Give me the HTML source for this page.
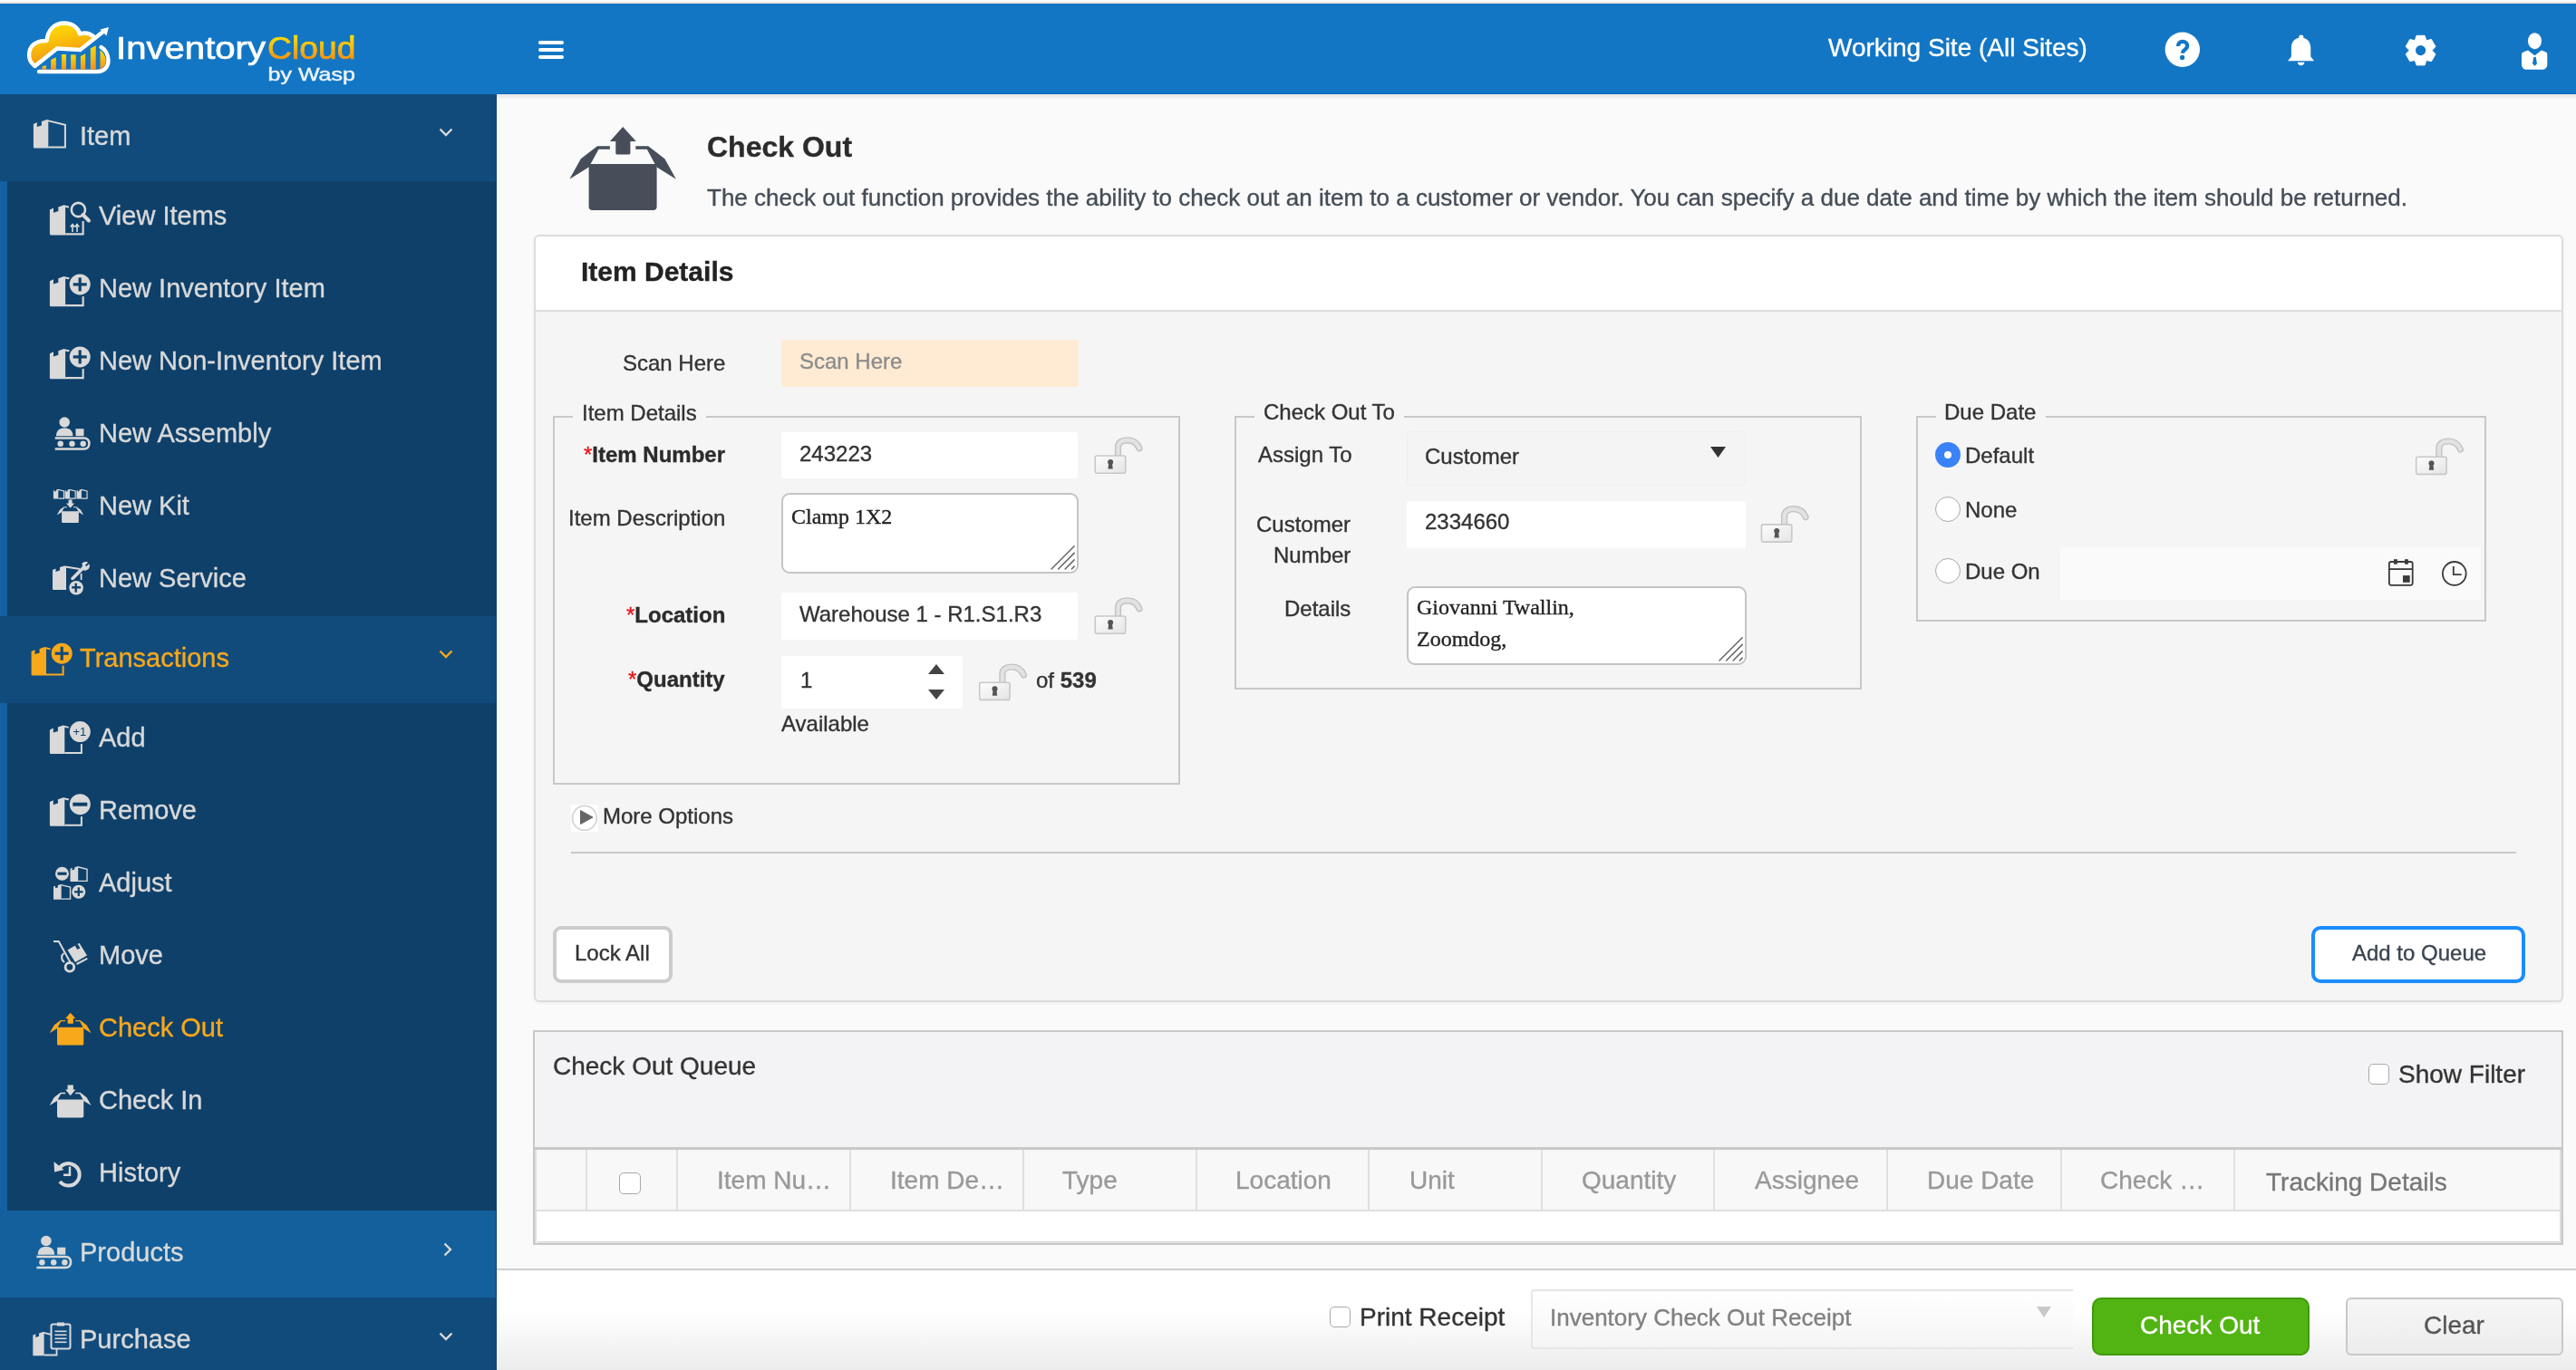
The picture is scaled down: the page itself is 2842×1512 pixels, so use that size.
<!DOCTYPE html>
<html><head><meta charset="utf-8"><style>
html,body{margin:0;padding:0;}
body{width:2842px;height:1512px;position:relative;overflow:hidden;background:#fafafa;font-family:"Liberation Sans",sans-serif;}
.t{position:absolute;white-space:nowrap;line-height:1;will-change:transform;-webkit-text-stroke-width:0.35px}
svg{overflow:visible}
</style></head><body>
<div style="position:absolute;left:0px;top:0px;width:2842px;height:2px;box-sizing:border-box;background:#fbfbfb"></div><div style="position:absolute;left:0px;top:2px;width:2842px;height:1px;box-sizing:border-box;background:#e2e1e1"></div><div style="position:absolute;left:0px;top:3px;width:2842px;height:1px;box-sizing:border-box;background:#eeeae6"></div><div style="position:absolute;left:0px;top:4px;width:2842px;height:1px;box-sizing:border-box;background:#036ac1"></div><div style="position:absolute;left:0px;top:5px;width:2842px;height:99px;box-sizing:border-box;background:#1376c4"></div><div style="position:absolute;left:548px;top:103px;width:2294px;height:1px;box-sizing:border-box;background:#036ac1"></div><div style="position:absolute;left:548px;top:104px;width:2294px;height:1408px;box-sizing:border-box;background:#fafafa"></div><div style="position:absolute;left:548px;top:104px;width:2294px;height:1px;box-sizing:border-box;background:#efebe6"></div><div style="position:absolute;left:548px;top:105px;width:2294px;height:5px;box-sizing:border-box;background:linear-gradient(#e4e4e4,rgba(250,250,250,0))"></div><div style="position:absolute;left:0px;top:104px;width:548px;height:96px;box-sizing:border-box;background:#114b7c"></div><div style="position:absolute;left:0px;top:200px;width:548px;height:480px;box-sizing:border-box;background:#0e406a"></div><div style="position:absolute;left:0px;top:200px;width:8px;height:480px;box-sizing:border-box;background:#1560a0"></div><div style="position:absolute;left:0px;top:680px;width:548px;height:96px;box-sizing:border-box;background:#114b7c"></div><div style="position:absolute;left:0px;top:776px;width:548px;height:560px;box-sizing:border-box;background:#0e406a"></div><div style="position:absolute;left:0px;top:776px;width:8px;height:560px;box-sizing:border-box;background:#1560a0"></div><div style="position:absolute;left:0px;top:1336px;width:548px;height:96px;box-sizing:border-box;background:#13609c"></div><div style="position:absolute;left:0px;top:1432px;width:548px;height:80px;box-sizing:border-box;background:#114b7c"></div><div style="position:absolute;left:547px;top:104px;width:1px;height:1408px;box-sizing:border-box;background:#0b4173"></div><div class="t" style="left:88px;top:136.45px;font-size:29px;color:#d9d9d9;font-weight:400;font-family:'Liberation Sans', sans-serif;">Item</div><div class="t" style="left:88px;top:712.45px;font-size:29px;color:#f7a81b;font-weight:400;font-family:'Liberation Sans', sans-serif;">Transactions</div><div class="t" style="left:88px;top:1368.45px;font-size:29px;color:#d9d9d9;font-weight:400;font-family:'Liberation Sans', sans-serif;">Products</div><div class="t" style="left:88px;top:1464.45px;font-size:29px;color:#d9d9d9;font-weight:400;font-family:'Liberation Sans', sans-serif;">Purchase</div><div class="t" style="left:108.5px;top:224.45px;font-size:29px;color:#d9d9d9;font-weight:400;font-family:'Liberation Sans', sans-serif;">View Items</div><div class="t" style="left:108.5px;top:304.45px;font-size:29px;color:#d9d9d9;font-weight:400;font-family:'Liberation Sans', sans-serif;">New Inventory Item</div><div class="t" style="left:108.5px;top:384.45px;font-size:29px;color:#d9d9d9;font-weight:400;font-family:'Liberation Sans', sans-serif;">New Non-Inventory Item</div><div class="t" style="left:108.5px;top:464.45px;font-size:29px;color:#d9d9d9;font-weight:400;font-family:'Liberation Sans', sans-serif;">New Assembly</div><div class="t" style="left:108.5px;top:544.45px;font-size:29px;color:#d9d9d9;font-weight:400;font-family:'Liberation Sans', sans-serif;">New Kit</div><div class="t" style="left:108.5px;top:624.45px;font-size:29px;color:#d9d9d9;font-weight:400;font-family:'Liberation Sans', sans-serif;">New Service</div><div class="t" style="left:108.5px;top:800.45px;font-size:29px;color:#d9d9d9;font-weight:400;font-family:'Liberation Sans', sans-serif;">Add</div><div class="t" style="left:108.5px;top:880.45px;font-size:29px;color:#d9d9d9;font-weight:400;font-family:'Liberation Sans', sans-serif;">Remove</div><div class="t" style="left:108.5px;top:960.45px;font-size:29px;color:#d9d9d9;font-weight:400;font-family:'Liberation Sans', sans-serif;">Adjust</div><div class="t" style="left:108.5px;top:1040.45px;font-size:29px;color:#d9d9d9;font-weight:400;font-family:'Liberation Sans', sans-serif;">Move</div><div class="t" style="left:108.5px;top:1120.45px;font-size:29px;color:#f7a81b;font-weight:400;font-family:'Liberation Sans', sans-serif;">Check Out</div><div class="t" style="left:108.5px;top:1200.45px;font-size:29px;color:#d9d9d9;font-weight:400;font-family:'Liberation Sans', sans-serif;">Check In</div><div class="t" style="left:108.5px;top:1280.45px;font-size:29px;color:#d9d9d9;font-weight:400;font-family:'Liberation Sans', sans-serif;">History</div><svg style="position:absolute;left:484px;top:141px;" width="16" height="10" viewBox="0 0 16 10"><path d="M1.5 1.5 L8 8 L14.5 1.5" fill="none" stroke="#d9d9d9" stroke-width="2.4"/></svg><svg style="position:absolute;left:484px;top:717px;" width="16" height="10" viewBox="0 0 16 10"><path d="M1.5 1.5 L8 8 L14.5 1.5" fill="none" stroke="#f7a81b" stroke-width="2.4"/></svg><svg style="position:absolute;left:489px;top:1371px;" width="10" height="16" viewBox="0 0 10 16"><path d="M1.5 1.5 L8 8 L1.5 14.5" fill="none" stroke="#d9d9d9" stroke-width="2.4"/></svg><svg style="position:absolute;left:484px;top:1470px;" width="16" height="10" viewBox="0 0 16 10"><path d="M1.5 1.5 L8 8 L14.5 1.5" fill="none" stroke="#d9d9d9" stroke-width="2.4"/></svg><div style="position:absolute;left:594px;top:45px;width:28px;height:4px;box-sizing:border-box;background:#fff;border-radius:2px"></div><div style="position:absolute;left:594px;top:53px;width:28px;height:4px;box-sizing:border-box;background:#fff;border-radius:2px"></div><div style="position:absolute;left:594px;top:61px;width:28px;height:4px;box-sizing:border-box;background:#fff;border-radius:2px"></div><div class="t" style="left:2017px;top:38.80px;font-size:28px;color:#fff;font-weight:400;font-family:'Liberation Sans', sans-serif;">Working Site (All Sites)</div><div class="t" style="left:780px;top:145.91px;font-size:32px;color:#2b2b2b;font-weight:700;font-family:'Liberation Sans', sans-serif;">Check Out</div><div class="t" style="left:780px;top:205.49px;font-size:26px;color:#454d57;font-weight:400;font-family:'Liberation Sans', sans-serif;">The check out function provides the ability to check out an item to a customer or vendor. You can specify a due date and time by which the item should be returned.</div><div style="position:absolute;left:589px;top:259px;width:2239px;height:847px;box-sizing:border-box;background:#f5f5f5;border:2px solid #dcdcdc;border-radius:6px;box-shadow:0 1px 3px rgba(0,0,0,0.06)"></div><div style="position:absolute;left:591px;top:261px;width:2235px;height:83px;box-sizing:border-box;background:#fff;border-bottom:2px solid #dcdcdc;border-radius:4px 4px 0 0"></div><div class="t" style="left:640.5px;top:284.61px;font-size:30px;color:#222;font-weight:700;font-family:'Liberation Sans', sans-serif;">Item Details</div><div class="t" style="right:2042px;top:388.68px;font-size:24px;color:#333;font-weight:400;font-family:'Liberation Sans', sans-serif;">Scan Here</div><div style="position:absolute;left:862px;top:375px;width:328px;height:52px;box-sizing:border-box;background:#ffebd3;border-radius:3px"></div><div class="t" style="left:882px;top:387.18px;font-size:24px;color:#8c8c8c;font-weight:400;font-family:'Liberation Sans', sans-serif;">Scan Here</div><div style="position:absolute;left:610px;top:459px;width:692px;height:407px;box-sizing:border-box;border:2px solid #c8c8c8"></div><div style="position:absolute;left:632px;top:458px;width:147px;height:4px;box-sizing:border-box;background:#f5f5f5"></div><div class="t" style="left:642px;top:443.68px;font-size:24px;color:#333;font-weight:400;font-family:'Liberation Sans', sans-serif;">Item Details</div><div style="position:absolute;left:1362px;top:459px;width:692px;height:302px;box-sizing:border-box;border:2px solid #c8c8c8"></div><div style="position:absolute;left:1384px;top:458px;width:165px;height:4px;box-sizing:border-box;background:#f5f5f5"></div><div class="t" style="left:1394px;top:443.18px;font-size:24px;color:#333;font-weight:400;font-family:'Liberation Sans', sans-serif;">Check Out To</div><div style="position:absolute;left:2114px;top:459px;width:629px;height:227px;box-sizing:border-box;border:2px solid #c8c8c8"></div><div style="position:absolute;left:2136px;top:458px;width:121px;height:4px;box-sizing:border-box;background:#f5f5f5"></div><div class="t" style="left:2145px;top:443.18px;font-size:24px;color:#333;font-weight:400;font-family:'Liberation Sans', sans-serif;">Due Date</div><div class="t" style="right:2042px;top:489.68px;font-size:24px;font-weight:700;color:#2b2b2b"><span style="color:#e8141b;font-weight:400">*</span>Item Number</div><div style="position:absolute;left:862px;top:477px;width:327px;height:51px;box-sizing:border-box;background:#fff;border-radius:2px"></div><div class="t" style="left:882px;top:488.68px;font-size:24px;color:#333;font-weight:400;font-family:'Liberation Sans', sans-serif;">243223</div><div class="t" style="right:2042px;top:559.68px;font-size:24px;color:#333;font-weight:400;font-family:'Liberation Sans', sans-serif;">Item Description</div><div style="position:absolute;left:862px;top:544px;width:328px;height:89px;box-sizing:border-box;background:#fff;border:2px solid #c4c4c4;border-radius:9px"></div><svg style="position:absolute;left:0px;top:0px;" width="2842" height="1512" viewBox="0 0 2842 1512"><path d="M1160.0,628 L1185.2,602.8 M1167.6,628 L1185.2,610.4 M1175.1,628 L1185.2,617.9 M1182.3,628 L1185.2,625.1 " stroke="#666" stroke-width="1.5" stroke-linecap="round" fill="none"/></svg><div class="t" style="left:873px;top:558.40px;font-size:24px;color:#222;font-weight:400;font-family:'Liberation Serif', serif;">Clamp 1X2</div><div class="t" style="right:2042px;top:666.68px;font-size:24px;font-weight:700;color:#2b2b2b"><span style="color:#e8141b;font-weight:400">*</span>Location</div><div style="position:absolute;left:862px;top:654px;width:327px;height:52px;box-sizing:border-box;background:#fff;border-radius:2px"></div><div class="t" style="left:882px;top:666.18px;font-size:24px;color:#333;font-weight:400;font-family:'Liberation Sans', sans-serif;">Warehouse 1 - R1.S1.R3</div><div class="t" style="right:2042px;top:737.68px;font-size:24px;font-weight:700;color:#2b2b2b"><span style="color:#e8141b;font-weight:400">*</span>Quantity</div><div style="position:absolute;left:862px;top:724px;width:200px;height:58px;box-sizing:border-box;background:#fff;border-radius:2px"></div><div class="t" style="left:883px;top:738.68px;font-size:24px;color:#333;font-weight:400;font-family:'Liberation Sans', sans-serif;">1</div><svg style="position:absolute;left:1024px;top:733px;" width="18" height="11" viewBox="0 0 18 11"><path d="M0 11 L9 0 L18 11 Z" fill="#444"/></svg><svg style="position:absolute;left:1024px;top:761px;" width="18" height="11" viewBox="0 0 18 11"><path d="M0 0 L18 0 L9 11 Z" fill="#444"/></svg><div class="t" style="left:1142.5px;top:738.68px;font-size:24px;color:#333">of <b>539</b></div><div class="t" style="left:862px;top:787.18px;font-size:24px;color:#333;font-weight:400;font-family:'Liberation Sans', sans-serif;">Available</div><div class="t" style="left:665px;top:889.18px;font-size:24px;color:#333;font-weight:400;font-family:'Liberation Sans', sans-serif;">More Options</div><div style="position:absolute;left:630px;top:940px;width:2146px;height:2px;box-sizing:border-box;background:#c8c8c8"></div><div style="position:absolute;left:610px;top:1022px;width:132px;height:63px;box-sizing:border-box;background:#fff;border:4px solid #cccccc;border-radius:9px"></div><div class="t" style="left:634px;top:1039.68px;font-size:24px;color:#333;font-weight:400;font-family:'Liberation Sans', sans-serif;">Lock All</div><div style="position:absolute;left:2550px;top:1022px;width:236px;height:63px;box-sizing:border-box;background:#fff;border:4px solid #1a8cff;border-radius:10px"></div><div class="t" style="left:2594.5px;top:1039.68px;font-size:24px;color:#3a4450;font-weight:400;font-family:'Liberation Sans', sans-serif;">Add to Queue</div><div class="t" style="left:1387.5px;top:490.18px;font-size:24px;color:#333;font-weight:400;font-family:'Liberation Sans', sans-serif;">Assign To</div><div style="position:absolute;left:1552px;top:476px;width:374px;height:60px;box-sizing:border-box;background:#f4f4f4;border:1px solid #efefef;border-radius:4px"></div><div class="t" style="left:1572px;top:492.18px;font-size:24px;color:#333;font-weight:400;font-family:'Liberation Sans', sans-serif;">Customer</div><svg style="position:absolute;left:1887px;top:493px;" width="17" height="12" viewBox="0 0 17 12"><path d="M0 0 L17 0 L8.5 12 Z" fill="#333"/></svg><div class="t" style="right:1352px;top:566.68px;font-size:24px;color:#333;font-weight:400;font-family:'Liberation Sans', sans-serif;">Customer</div><div class="t" style="right:1352px;top:600.68px;font-size:24px;color:#333;font-weight:400;font-family:'Liberation Sans', sans-serif;">Number</div><div style="position:absolute;left:1552px;top:553px;width:374px;height:52px;box-sizing:border-box;background:#fff;border-radius:2px"></div><div class="t" style="left:1572px;top:564.18px;font-size:24px;color:#333;font-weight:400;font-family:'Liberation Sans', sans-serif;">2334660</div><div class="t" style="right:1352px;top:660.18px;font-size:24px;color:#333;font-weight:400;font-family:'Liberation Sans', sans-serif;">Details</div><div style="position:absolute;left:1552px;top:647px;width:375px;height:87px;box-sizing:border-box;background:#fff;border:2px solid #c4c4c4;border-radius:9px"></div><svg style="position:absolute;left:0px;top:0px;" width="2842" height="1512" viewBox="0 0 2842 1512"><path d="M1897.0,729 L1922.2,703.8 M1904.6,729 L1922.2,711.4 M1912.1,729 L1922.2,718.9 M1919.3,729 L1922.2,726.1 " stroke="#666" stroke-width="1.5" stroke-linecap="round" fill="none"/></svg><div class="t" style="left:1563px;top:658.40px;font-size:24px;color:#222;font-weight:400;font-family:'Liberation Serif', serif;">Giovanni Twallin,</div><div class="t" style="left:1563px;top:692.90px;font-size:24px;color:#222;font-weight:400;font-family:'Liberation Serif', serif;">Zoomdog,</div><div class="t" style="left:2168px;top:490.68px;font-size:24px;color:#333;font-weight:400;font-family:'Liberation Sans', sans-serif;">Default</div><div class="t" style="left:2168px;top:550.68px;font-size:24px;color:#333;font-weight:400;font-family:'Liberation Sans', sans-serif;">None</div><div class="t" style="left:2168px;top:618.68px;font-size:24px;color:#333;font-weight:400;font-family:'Liberation Sans', sans-serif;">Due On</div><div style="position:absolute;left:2273px;top:604px;width:464px;height:58px;box-sizing:border-box;background:#fafafa;border-radius:3px"></div><div style="position:absolute;left:588px;top:1137px;width:2240px;height:237px;box-sizing:border-box;background:#f3f3f5;border:2px solid #c8c8c8;border-bottom:none"></div><div class="t" style="left:609.5px;top:1162.80px;font-size:28px;color:#333;font-weight:400;font-family:'Liberation Sans', sans-serif;">Check Out Queue</div><div class="t" style="left:2646px;top:1172.30px;font-size:28px;color:#333;font-weight:400;font-family:'Liberation Sans', sans-serif;">Show Filter</div><div style="position:absolute;left:588px;top:1266px;width:2240px;height:108px;box-sizing:border-box;border:2px solid #c8c8c8;border-top:3px solid #c8c8c8;background:#fff"></div><div style="position:absolute;left:591px;top:1269px;width:2235px;height:68px;box-sizing:border-box;background:#f8f8f8;border-bottom:2px solid #e0e0e0"></div><div style="position:absolute;left:646px;top:1269px;width:2px;height:68px;box-sizing:border-box;background:#e0e0e0"></div><div style="position:absolute;left:746px;top:1269px;width:2px;height:68px;box-sizing:border-box;background:#e0e0e0"></div><div style="position:absolute;left:937px;top:1269px;width:2px;height:68px;box-sizing:border-box;background:#e0e0e0"></div><div style="position:absolute;left:1128px;top:1269px;width:2px;height:68px;box-sizing:border-box;background:#e0e0e0"></div><div style="position:absolute;left:1319px;top:1269px;width:2px;height:68px;box-sizing:border-box;background:#e0e0e0"></div><div style="position:absolute;left:1509px;top:1269px;width:2px;height:68px;box-sizing:border-box;background:#e0e0e0"></div><div style="position:absolute;left:1700px;top:1269px;width:2px;height:68px;box-sizing:border-box;background:#e0e0e0"></div><div style="position:absolute;left:1890px;top:1269px;width:2px;height:68px;box-sizing:border-box;background:#e0e0e0"></div><div style="position:absolute;left:2081px;top:1269px;width:2px;height:68px;box-sizing:border-box;background:#e0e0e0"></div><div style="position:absolute;left:2273px;top:1269px;width:2px;height:68px;box-sizing:border-box;background:#e0e0e0"></div><div style="position:absolute;left:2464px;top:1269px;width:2px;height:68px;box-sizing:border-box;background:#e0e0e0"></div><div class="t" style="left:791px;top:1289.30px;font-size:28px;color:#999;font-weight:400;font-family:'Liberation Sans', sans-serif;">Item Nu…</div><div class="t" style="left:981.5px;top:1289.30px;font-size:28px;color:#999;font-weight:400;font-family:'Liberation Sans', sans-serif;">Item De…</div><div class="t" style="left:1171.5px;top:1289.30px;font-size:28px;color:#999;font-weight:400;font-family:'Liberation Sans', sans-serif;">Type</div><div class="t" style="left:1362.5px;top:1289.30px;font-size:28px;color:#999;font-weight:400;font-family:'Liberation Sans', sans-serif;">Location</div><div class="t" style="left:1554.5px;top:1289.30px;font-size:28px;color:#999;font-weight:400;font-family:'Liberation Sans', sans-serif;">Unit</div><div class="t" style="left:1744.5px;top:1289.30px;font-size:28px;color:#999;font-weight:400;font-family:'Liberation Sans', sans-serif;">Quantity</div><div class="t" style="left:1935.5px;top:1289.30px;font-size:28px;color:#999;font-weight:400;font-family:'Liberation Sans', sans-serif;">Assignee</div><div class="t" style="left:2125.5px;top:1289.30px;font-size:28px;color:#999;font-weight:400;font-family:'Liberation Sans', sans-serif;">Due Date</div><div class="t" style="left:2316.5px;top:1289.30px;font-size:28px;color:#999;font-weight:400;font-family:'Liberation Sans', sans-serif;">Check …</div><div class="t" style="left:2500px;top:1291.30px;font-size:28px;color:#777;font-weight:400;font-family:'Liberation Sans', sans-serif;">Tracking Details</div><div style="position:absolute;left:593px;top:1370px;width:2233px;height:2px;box-sizing:border-box;background:#dedede"></div><div style="position:absolute;left:2824px;top:1269px;width:2px;height:103px;box-sizing:border-box;background:#dedede"></div><div style="position:absolute;left:590px;top:1269px;width:2px;height:103px;box-sizing:border-box;background:#dedede"></div><div style="position:absolute;left:548px;top:1400px;width:2294px;height:112px;box-sizing:border-box;background:linear-gradient(#fff 0%,#fff 40%,#ececec 100%);border-top:2px solid #cfcfcf"></div><div class="t" style="left:1500px;top:1439.80px;font-size:28px;color:#333;font-weight:400;font-family:'Liberation Sans', sans-serif;">Print Receipt</div><div style="position:absolute;left:1689px;top:1423px;width:598px;height:66px;box-sizing:border-box;background:linear-gradient(#fff,#f5f5f5);border:2px solid #e6e6e6;border-right:none;border-radius:4px 0 0 4px"></div><div class="t" style="left:1710px;top:1440.99px;font-size:26px;color:#808080;font-weight:400;font-family:'Liberation Sans', sans-serif;">Inventory Check Out Receipt</div><svg style="position:absolute;left:2247px;top:1442px;" width="16" height="12" viewBox="0 0 16 12"><path d="M0 0 L16 0 L8 12 Z" fill="#c8c8c8"/></svg><div style="position:absolute;left:2308px;top:1432px;width:240px;height:64px;box-sizing:border-box;background:#52b412;border:2px solid #3f9a0d;border-radius:10px"></div><div class="t" style="left:2361px;top:1448.80px;font-size:28px;color:#fff;font-weight:400;font-family:'Liberation Sans', sans-serif;">Check Out</div><div style="position:absolute;left:2588px;top:1432px;width:240px;height:64px;box-sizing:border-box;background:linear-gradient(#f6f6f6,#ececec);border:2px solid #c8c8c8;border-radius:6px"></div><div class="t" style="left:2674px;top:1448.80px;font-size:28px;color:#555;font-weight:400;font-family:'Liberation Sans', sans-serif;">Clear</div><div style="position:absolute;left:2613px;top:1174px;width:23px;height:23px;box-sizing:border-box;background:#fff;border:1.5px solid #a9a9a9;border-radius:5px"></div><div style="position:absolute;left:683px;top:1294px;width:24px;height:24px;box-sizing:border-box;background:#fff;border:1.5px solid #a9a9a9;border-radius:5px"></div><div style="position:absolute;left:1467px;top:1442px;width:23px;height:23px;box-sizing:border-box;background:#fff;border:1.5px solid #a9a9a9;border-radius:5px"></div><div style="position:absolute;left:2135px;top:488px;width:28px;height:28px;box-sizing:border-box;background:#3a82f7;border-radius:50%"></div><div style="position:absolute;left:2145px;top:498px;width:8px;height:8px;box-sizing:border-box;background:#fff;border-radius:50%"></div><div style="position:absolute;left:2135px;top:548px;width:28px;height:28px;box-sizing:border-box;background:#fff;border:1.5px solid #a9a9a9;border-radius:50%"></div><div style="position:absolute;left:2135px;top:616px;width:28px;height:28px;box-sizing:border-box;background:#fff;border:1.5px solid #a9a9a9;border-radius:50%"></div><svg style="position:absolute;left:0;top:0;pointer-events:none" width="2842" height="1512" viewBox="0 0 2842 1512">
<defs>
<linearGradient id="lgY" x1="0" y1="0" x2="0.35" y2="1"><stop offset="0" stop-color="#ffe800"/><stop offset="1" stop-color="#f39313"/></linearGradient>
<linearGradient id="lgB" x1="0" y1="1" x2="0" y2="0"><stop offset="0" stop-color="#f7901a"/><stop offset="1" stop-color="#f9dc0a"/></linearGradient>
<linearGradient id="lgT" x1="0" y1="0" x2="0" y2="1"><stop offset="0" stop-color="#fbe30c"/><stop offset="1" stop-color="#f39417"/></linearGradient>
</defs>
<g transform="translate(26,18)">
<path d="M12,54 C4,47 5,33 15.5,29.5 C19,28 22.5,27.8 25.5,28.5 C26.5,16 34,9 45,9 C54,9 60.5,15 61.5,21.5 C67,19.5 72.5,20.5 77,24 L62,36 L37,34 Z" fill="url(#lgY)"/>
<path d="M12.5,55 C3,48 4,33 15.5,28.5 C19,27 22.5,26.8 25.5,27 C26.5,15 34,7.5 45,7.5 C54,7.5 60.5,13 62,19.5 C67.5,17.5 73,18.5 78,23" fill="none" stroke="#fff" stroke-width="4.4" stroke-linejoin="round" stroke-linecap="round"/>
<path d="M12.5,55 L37,35.5 L62.5,37 L89,16" fill="none" stroke="#fff" stroke-width="4.4" stroke-linejoin="miter"/>
<path d="M94,12 L84.5,14.5 L91.5,21.5 Z" fill="#fff"/>
<path d="M17,61 L82,61 C89,61 93.5,56 93.5,48.5 C93.5,42 90,36.5 85.5,34" fill="none" stroke="#fff" stroke-width="4.4" stroke-linecap="round"/>
<path d="M84.5,37.5 C88.5,40 90.8,45 90.8,49 C90.8,53 89,56.5 84.5,58.6 Z" fill="url(#lgB)"/>
<path d="M20.4,55.5 L25,53.9 L25,58.8 L20.4,58.8 Z" fill="url(#lgB)"/>
<path d="M30.1,48 L35.8,45.3 L35.8,58.8 L30.1,58.8 Z" fill="url(#lgB)"/>
<path d="M41.9,42 L47,42 L47,58.8 L41.9,58.8 Z" fill="url(#lgB)"/>
<path d="M52.1,42.4 L57.7,42.4 L57.7,58.8 L52.1,58.8 Z" fill="url(#lgB)"/>
<path d="M62.9,44 L68.2,41.3 L68.2,58.8 L62.9,58.8 Z" fill="url(#lgB)"/>
<path d="M73.8,35.5 L79.7,32.2 L79.7,58.8 L73.8,58.8 Z" fill="url(#lgB)"/>
</g>
</svg><svg style="position:absolute;left:0;top:0;pointer-events:none" width="2842" height="1512" viewBox="0 0 2842 1512"><text x="128" y="65.3" font-family="Liberation Sans" font-size="35" fill="#fff" stroke="#fff" stroke-width="0.7" textLength="165" lengthAdjust="spacingAndGlyphs">Inventory</text><defs><linearGradient id="lgC" x1="0" y1="0" x2="0" y2="1"><stop offset="0.1" stop-color="#fae60a"/><stop offset="0.85" stop-color="#f39012"/></linearGradient></defs><text x="295" y="65.3" font-family="Liberation Sans" font-size="35" fill="url(#lgC)" stroke="url(#lgC)" stroke-width="0.7" textLength="97.5" lengthAdjust="spacingAndGlyphs">Cloud</text><text x="295.5" y="89.3" font-family="Liberation Sans" font-size="21" fill="#eef4fb" stroke="#eef4fb" stroke-width="0.45" textLength="96.5" lengthAdjust="spacingAndGlyphs">by Wasp</text></svg><svg style="position:absolute;left:0;top:0;pointer-events:none" width="2842" height="1512" viewBox="0 0 2842 1512">
<circle cx="2407.8" cy="54.7" r="19.2" fill="#fff"/>
<path d="M2403,51 C2403,47.8 2405,45.9 2408,45.9 C2411.2,45.9 2413.2,47.9 2413.2,50.5 C2413.2,53.3 2410.8,54.5 2409.3,55.8 C2408.3,56.7 2408,57.5 2408,58.8" fill="none" stroke="#1376c4" stroke-width="4.2"/>
<circle cx="2407.6" cy="63.4" r="2.6" fill="#1376c4"/>
<circle cx="2538.8" cy="41" r="2.6" fill="#fff"/>
<path d="M2524,67.3 L2527.9,62.6 L2527.9,53 C2527.9,45.5 2532.5,41.6 2538.6,41.6 C2544.7,41.6 2549.3,45.5 2549.3,53 L2549.3,62.6 L2553.1,67.3 Z" fill="#fff"/>
<path d="M2534.9,68.8 L2542.3,68.8 C2542.3,71 2540.6,72.3 2538.6,72.3 C2536.6,72.3 2534.9,71 2534.9,68.8 Z" fill="#fff"/>
<ellipse cx="2796.5" cy="45.2" rx="7.5" ry="9" fill="#fff"/>
<path d="M2782,60.5 C2782,58.5 2783,57.8 2784.5,57.2 L2789,55.6 L2796.5,61.3 L2803.9,55.6 L2808.3,57.2 C2809.7,57.8 2810.3,58.5 2810.3,60.5 L2810.3,71 C2810.3,74.5 2808,76.8 2804.5,76.8 L2787.8,76.8 C2784.3,76.8 2782,74.5 2782,71 Z" fill="#fff"/>
<path d="M2795.3,63 L2797.7,63 L2799,70.2 L2796.5,72.7 L2794,70.2 Z" fill="#1376c4"/>
<path d="M2664.35,44.66 L2666.10,39.31 L2675.10,39.31 L2676.85,44.66 L2676.95,44.72 L2682.46,43.56 L2686.96,51.35 L2683.20,55.54 L2683.20,55.66 L2686.96,59.85 L2682.46,67.64 L2676.95,66.48 L2676.85,66.54 L2675.10,71.89 L2666.10,71.89 L2664.35,66.54 L2664.25,66.48 L2658.74,67.64 L2654.24,59.85 L2658.00,55.66 L2658.00,55.54 L2654.24,51.35 L2658.74,43.56 L2664.25,44.72 Z" fill="#fff" stroke="#fff" stroke-width="1" stroke-linejoin="round"/><circle cx="2670.6" cy="55.6" r="5.6" fill="#1376c4"/></svg><svg style="position:absolute;left:0;top:0;pointer-events:none" width="2842" height="1512" viewBox="0 0 2842 1512"><g transform="translate(36.9,132) scale(1.0)"><path d="M0,4.9 L3.9,3.1 L3.9,8.1 L9,6.4 L9,2 L14.8,0 L16.4,0.5 L16.4,31.5 L1.2,31.5 Q0,31.5 0,30.3 Z" fill="#d9d9d9"/><path d="M15.6,1.1 L35,5.7 L35,30.5 L16.4,30.5" fill="none" stroke="#d9d9d9" stroke-width="2"/></g><g transform="translate(54.9,226.3) scale(1.05)"><path d="M0,4.9 L3.9,3.1 L3.9,8.1 L9,6.4 L9,2 L14.8,0 L16.4,0.5 L16.4,31.5 L1.2,31.5 Q0,31.5 0,30.3 Z" fill="#d9d9d9"/><path d="M15.6,1.1 L35,5.7 L35,30.5 L16.4,30.5" fill="none" stroke="#d9d9d9" stroke-width="2"/></g><rect x="76" y="224" width="20" height="20" fill="#0e406a"/><circle cx="86.4" cy="231.5" r="7.6" fill="none" stroke="#d9d9d9" stroke-width="2.6"/><path d="M91.5,237 L98,243.5" stroke="#d9d9d9" stroke-width="4" stroke-linecap="round"/><path d="M80,256 L80,248 M77.8,250.5 L80,247.5 L82.2,250.5 M85,256 L85,248 M82.8,250.5 L85,247.5 L87.2,250.5" fill="none" stroke="#d9d9d9" stroke-width="1.6"/><g transform="translate(54.9,305.1) scale(1.05)"><path d="M0,4.9 L3.9,3.1 L3.9,8.1 L9,6.4 L9,2 L14.8,0 L16.4,0.5 L16.4,31.5 L1.2,31.5 Q0,31.5 0,30.3 Z" fill="#d9d9d9"/><path d="M15.6,1.1 L35,5.7 L35,30.5 L16.4,30.5" fill="none" stroke="#d9d9d9" stroke-width="2"/></g><circle cx="88.2" cy="313.90000000000003" r="13.5" fill="#0e406a"/><circle cx="88.2" cy="313.90000000000003" r="11.5" fill="#d9d9d9"/><rect x="80.7" y="312.3" width="15" height="3.2" fill="#0e406a"/><rect x="86.60000000000001" y="306.40000000000003" width="3.2" height="15" fill="#0e406a"/><g transform="translate(54.9,385.1) scale(1.05)"><path d="M0,4.9 L3.9,3.1 L3.9,8.1 L9,6.4 L9,2 L14.8,0 L16.4,0.5 L16.4,31.5 L1.2,31.5 Q0,31.5 0,30.3 Z" fill="#d9d9d9"/><path d="M15.6,1.1 L35,5.7 L35,30.5 L16.4,30.5" fill="none" stroke="#d9d9d9" stroke-width="2"/></g><circle cx="88.2" cy="393.90000000000003" r="13.5" fill="#0e406a"/><circle cx="88.2" cy="393.90000000000003" r="11.5" fill="#d9d9d9"/><rect x="80.7" y="392.3" width="15" height="3.2" fill="#0e406a"/><rect x="86.60000000000001" y="386.40000000000003" width="3.2" height="15" fill="#0e406a"/><g transform="translate(34.6,714) scale(1.0)"><path d="M0,4.9 L3.9,3.1 L3.9,8.1 L9,6.4 L9,2 L14.8,0 L16.4,0.5 L16.4,31.5 L1.2,31.5 Q0,31.5 0,30.3 Z" fill="#f7a81b"/><path d="M15.6,1.1 L35,5.7 L35,30.5 L16.4,30.5" fill="none" stroke="#f7a81b" stroke-width="2"/></g><circle cx="68.2" cy="721.2" r="13.5" fill="#114b7c"/><circle cx="68.2" cy="721.2" r="11.5" fill="#f7a81b"/><rect x="60.7" y="719.6" width="15" height="3.2" fill="#114b7c"/><rect x="66.60000000000001" y="713.7" width="3.2" height="15" fill="#114b7c"/><g transform="translate(54.9,800.5) scale(1.0)"><path d="M0,4.9 L3.9,3.1 L3.9,8.1 L9,6.4 L9,2 L14.8,0 L16.4,0.5 L16.4,31.5 L1.2,31.5 Q0,31.5 0,30.3 Z" fill="#d9d9d9"/><path d="M15.6,1.1 L35,5.7 L35,30.5 L16.4,30.5" fill="none" stroke="#d9d9d9" stroke-width="2"/></g><circle cx="88.3" cy="807.6" r="13.5" fill="#0e406a"/><circle cx="88.3" cy="807.6" r="11.5" fill="#d9d9d9"/><text x="87.8" y="812.1" font-family="Liberation Sans" font-size="13" text-anchor="middle" fill="#0e406a">+1</text><g transform="translate(54.9,880.2) scale(1.0)"><path d="M0,4.9 L3.9,3.1 L3.9,8.1 L9,6.4 L9,2 L14.8,0 L16.4,0.5 L16.4,31.5 L1.2,31.5 Q0,31.5 0,30.3 Z" fill="#d9d9d9"/><path d="M15.6,1.1 L35,5.7 L35,30.5 L16.4,30.5" fill="none" stroke="#d9d9d9" stroke-width="2"/></g><circle cx="88.3" cy="887.7" r="13.5" fill="#0e406a"/><circle cx="88.3" cy="887.7" r="11.5" fill="#d9d9d9"/><rect x="80.3" y="885.7" width="16" height="4" fill="#0e406a"/><g transform="translate(60.7,460.5)"><circle cx="10.5" cy="5.5" r="5.8" fill="#d9d9d9"/><path d="M1.3,20.7 C1.3,14.5 5,12 10.5,12 C16,12 19.7,14.5 19.7,20.7 Z" fill="#d9d9d9"/><rect x="22.8" y="12.7" width="9" height="8" fill="#d9d9d9"/><path d="M0,23 L32,23 C35.5,23 37.7,25.5 37.7,29 C37.7,32.5 35.5,35 32,35 L0,35" fill="none" stroke="#d9d9d9" stroke-width="2.6"/><circle cx="6" cy="29.3" r="3.2" fill="#d9d9d9"/><circle cx="18.8" cy="29.3" r="3.2" fill="#d9d9d9"/><circle cx="31" cy="29.3" r="3.2" fill="#d9d9d9"/></g><g transform="translate(40.4,1364)"><circle cx="10.5" cy="5.5" r="5.8" fill="#d9d9d9"/><path d="M1.3,20.7 C1.3,14.5 5,12 10.5,12 C16,12 19.7,14.5 19.7,20.7 Z" fill="#d9d9d9"/><rect x="22.8" y="12.7" width="9" height="8" fill="#d9d9d9"/><path d="M0,23 L32,23 C35.5,23 37.7,25.5 37.7,29 C37.7,32.5 35.5,35 32,35 L0,35" fill="none" stroke="#d9d9d9" stroke-width="2.6"/><circle cx="6" cy="29.3" r="3.2" fill="#d9d9d9"/><circle cx="18.8" cy="29.3" r="3.2" fill="#d9d9d9"/><circle cx="31" cy="29.3" r="3.2" fill="#d9d9d9"/></g><g transform="translate(58.9,540) scale(0.33)"><path d="M0,4.9 L3.9,3.1 L3.9,8.1 L9,6.4 L9,2 L14.8,0 L16.4,0.5 L16.4,31.5 L0,31.5 Z" fill="#d9d9d9"/><path d="M15.6,1.1 L35,5.7 L35,30.5 L16.4,30.5" fill="none" stroke="#d9d9d9" stroke-width="3.5"/></g><g transform="translate(71.6,540) scale(0.33)"><path d="M0,4.9 L3.9,3.1 L3.9,8.1 L9,6.4 L9,2 L14.8,0 L16.4,0.5 L16.4,31.5 L0,31.5 Z" fill="#d9d9d9"/><path d="M15.6,1.1 L35,5.7 L35,30.5 L16.4,30.5" fill="none" stroke="#d9d9d9" stroke-width="3.5"/></g><g transform="translate(84.5,540) scale(0.33)"><path d="M0,4.9 L3.9,3.1 L3.9,8.1 L9,6.4 L9,2 L14.8,0 L16.4,0.5 L16.4,31.5 L0,31.5 Z" fill="#d9d9d9"/><path d="M15.6,1.1 L35,5.7 L35,30.5 L16.4,30.5" fill="none" stroke="#d9d9d9" stroke-width="3.5"/></g><path d="M75.6,551.5 L79.6,551.5 L79.6,555.5 L82.2,555.5 L77.6,560.8 L73,555.5 L75.6,555.5 Z" fill="#d9d9d9"/><g transform="translate(62.7,554) scale(0.25)"><path d="M21.6,41.1 L96.6,41.1 L96.6,88 Q96.6,92 92.6,92 L25.6,92 Q21.6,92 21.6,88 Z" fill="#d9d9d9"/><path d="M0.3,57.8 L12.8,35.3 L31,21.3 L44.9,21.3 L44.9,24.8 L32.4,24.8 L23.6,41.1 L21.6,44.6 Z" fill="#d9d9d9"/><path d="M117.9,57.8 L105.4,35.3 L87.2,21.3 L73.3,21.3 L73.3,24.8 L85.8,24.8 L94.6,41.1 L96.6,44.6 Z" fill="#d9d9d9"/><path style="display:none" d="M59.2,0 L73.8,16 L67.4,16 L67.4,29 Q67.4,30.6 65.8,30.6 L52.9,30.6 Q51.3,30.6 51.3,29 L51.3,16 L44.9,16 Z" fill="#d9d9d9"/></g><path d="M58,629 L61.5,627.5 L61.5,631 L66,629.5 L66,626 L71,624.5 L73,625 L73,651 L59,651 Q58,651 58,650 Z" fill="#d9d9d9"/><path d="M72,625.5 L88,628 M89.6,633 L89.6,640" fill="none" stroke="#d9d9d9" stroke-width="1.8"/><path d="M80,638.5 L93,625.5" stroke="#d9d9d9" stroke-width="3.6" stroke-linecap="round"/><path d="M90.5,621.5 C92.5,619.5 96,619.5 97.2,620.8 L94,623.8 L95.2,625.2 L98.3,622.2 C99.5,624 99,627 97,628.6 C95.5,629.8 93,630 91.5,629 Z" fill="#d9d9d9"/><circle cx="84.1" cy="648.7" r="9.5" fill="#0e406a"/><circle cx="84.1" cy="648.7" r="7.8" fill="#d9d9d9"/><rect x="79.1" y="647.1" width="10" height="2.4" fill="#0e406a"/><rect x="82.5" y="643.7" width="2.4" height="10" fill="#0e406a"/><circle cx="68.5" cy="964.2" r="7.5" fill="#d9d9d9"/><rect x="63.5" y="962.6" width="10" height="3.2" fill="#0e406a"/><g transform="translate(77.5,956.2) scale(0.53)"><path d="M0,4.9 L3.9,3.1 L3.9,8.1 L9,6.4 L9,2 L14.8,0 L16.4,0.5 L16.4,31.5 L0,31.5 Z" fill="#d9d9d9"/><path d="M15.6,1.1 L35,5.7 L35,30.5 L16.4,30.5" fill="none" stroke="#d9d9d9" stroke-width="2.6"/></g><g transform="translate(59,976) scale(0.53)"><path d="M0,4.9 L3.9,3.1 L3.9,8.1 L9,6.4 L9,2 L14.8,0 L16.4,0.5 L16.4,31.5 L0,31.5 Z" fill="#d9d9d9"/><path d="M15.6,1.1 L35,5.7 L35,30.5 L16.4,30.5" fill="none" stroke="#d9d9d9" stroke-width="2.6"/></g><circle cx="86.8" cy="984.2" r="7.5" fill="#d9d9d9"/><rect x="82" y="983.2" width="9.6" height="2.2" fill="#0e406a"/><rect x="85.7" y="979.4" width="2.2" height="9.6" fill="#0e406a"/><path d="M59,1039 L64.8,1039 L77.5,1062" fill="none" stroke="#d9d9d9" stroke-width="2"/><path d="M74.5,1048.5 L87.5,1040.8 L96,1054.5 L83,1062 Z" fill="#d9d9d9"/><path d="M82.5,1043.5 L85.5,1048 L88.5,1046.2 L85.5,1041.8 Z" fill="#0e406a"/><circle cx="76.9" cy="1067.3" r="4.8" fill="none" stroke="#d9d9d9" stroke-width="2.8"/><path d="M84.5,1064 L96.3,1057.8" stroke="#d9d9d9" stroke-width="2"/><path d="M71,1062 C67,1059 67.5,1054 70.5,1052" fill="none" stroke="#d9d9d9" stroke-width="2"/><g transform="translate(54.6,1117.7) scale(0.39)"><path d="M21.6,41.1 L96.6,41.1 L96.6,88 Q96.6,92 92.6,92 L25.6,92 Q21.6,92 21.6,88 Z" fill="#f7a81b"/><path d="M0.3,57.8 L12.8,35.3 L31,21.3 L44.9,21.3 L44.9,24.8 L32.4,24.8 L23.6,41.1 L21.6,44.6 Z" fill="#f7a81b"/><path d="M117.9,57.8 L105.4,35.3 L87.2,21.3 L73.3,21.3 L73.3,24.8 L85.8,24.8 L94.6,41.1 L96.6,44.6 Z" fill="#f7a81b"/><path d="M59.2,0 L73.8,16 L67.4,16 L67.4,29 Q67.4,30.6 65.8,30.6 L52.9,30.6 Q51.3,30.6 51.3,29 L51.3,16 L44.9,16 Z" fill="#f7a81b"/></g><g transform="translate(54.6,1197.5) scale(0.39)"><path d="M21.6,41.1 L96.6,41.1 L96.6,88 Q96.6,92 92.6,92 L25.6,92 Q21.6,92 21.6,88 Z" fill="#d9d9d9"/><path d="M0.3,57.8 L12.8,35.3 L31,21.3 L44.9,21.3 L44.9,24.8 L32.4,24.8 L23.6,41.1 L21.6,44.6 Z" fill="#d9d9d9"/><path d="M117.9,57.8 L105.4,35.3 L87.2,21.3 L73.3,21.3 L73.3,24.8 L85.8,24.8 L94.6,41.1 L96.6,44.6 Z" fill="#d9d9d9"/><path d="M51.3,0 L67.4,0 L67.4,13 L73.8,13 L59.2,30 L44.9,13 L51.3,13 Z" fill="#d9d9d9"/></g><path d="M64.5,1291 A12.2,12.2 0 1 1 66,1304" fill="none" stroke="#d9d9d9" stroke-width="4"/><path d="M59.5,1282 L60,1293.5 L70.5,1291 Z" fill="#d9d9d9"/><path d="M77,1287.5 L77,1296.8 L70,1296.8" fill="none" stroke="#d9d9d9" stroke-width="2.4"/><g transform="translate(36.3,1470) scale(0.75)"><path d="M0,4.9 L3.9,3.1 L3.9,8.1 L9,6.4 L9,2 L14.8,0 L16.4,0.5 L16.4,35 L0,35 Z" fill="#d9d9d9"/><path d="M15.6,1.1 L35,5.7 L35,34 L16.4,34" fill="none" stroke="#d9d9d9" stroke-width="2.4"/></g><rect x="56.5" y="1461.5" width="21" height="27" rx="2" fill="#114b7c" stroke="#d9d9d9" stroke-width="2"/><rect x="63" y="1459.5" width="8" height="4" fill="#d9d9d9"/><rect x="60.5" y="1468.5" width="13" height="1.6" fill="#d9d9d9"/><rect x="60.5" y="1472.5" width="13" height="1.6" fill="#d9d9d9"/><rect x="60.5" y="1476.5" width="13" height="1.6" fill="#d9d9d9"/><rect x="60.5" y="1480.5" width="13" height="1.6" fill="#d9d9d9"/></svg><svg style="position:absolute;left:0;top:0;pointer-events:none" width="2842" height="1512" viewBox="0 0 2842 1512"><g transform="translate(628,140) scale(1.0)"><path d="M21.6,41.1 L96.6,41.1 L96.6,88 Q96.6,92 92.6,92 L25.6,92 Q21.6,92 21.6,88 Z" fill="#474e59"/><path d="M0.3,57.8 L12.8,35.3 L31,21.3 L44.9,21.3 L44.9,24.8 L32.4,24.8 L23.6,41.1 L21.6,44.6 Z" fill="#474e59"/><path d="M117.9,57.8 L105.4,35.3 L87.2,21.3 L73.3,21.3 L73.3,24.8 L85.8,24.8 L94.6,41.1 L96.6,44.6 Z" fill="#474e59"/><path d="M59.2,0 L73.8,16 L67.4,16 L67.4,29 Q67.4,30.6 65.8,30.6 L52.9,30.6 Q51.3,30.6 51.3,29 L51.3,16 L44.9,16 Z" fill="#474e59"/></g><defs><linearGradient id="lockg" x1="0" y1="0" x2="1" y2="1"><stop offset="0" stop-color="#fdfdfd"/><stop offset="1" stop-color="#e4e4e4"/></linearGradient></defs><g transform="translate(1200,475)"><path d="M33.5,27.5 L33.5,18.5 C33.5,13.5 37.5,10.8 44,10.8 C50,10.8 54.5,13.5 57,19.8" fill="none" stroke="#c2c2c2" stroke-width="7.2" stroke-linecap="round"/><path d="M33.5,27.5 L33.5,18.5 C33.5,13.5 37.5,10.8 44,10.8 C50,10.8 54.5,13.5 57,19.8" fill="none" stroke="#e2e2e2" stroke-width="4.4" stroke-linecap="round"/><rect x="8.3" y="28" width="33.4" height="19.2" rx="2" fill="url(#lockg)" stroke="#c8c8c8" stroke-width="1.6"/><circle cx="25.1" cy="35" r="3" fill="#555"/><path d="M23.3,36 L26.9,36 L27.8,42.6 L22.4,42.6 Z" fill="#555"/></g><g transform="translate(1200,652)"><path d="M33.5,27.5 L33.5,18.5 C33.5,13.5 37.5,10.8 44,10.8 C50,10.8 54.5,13.5 57,19.8" fill="none" stroke="#c2c2c2" stroke-width="7.2" stroke-linecap="round"/><path d="M33.5,27.5 L33.5,18.5 C33.5,13.5 37.5,10.8 44,10.8 C50,10.8 54.5,13.5 57,19.8" fill="none" stroke="#e2e2e2" stroke-width="4.4" stroke-linecap="round"/><rect x="8.3" y="28" width="33.4" height="19.2" rx="2" fill="url(#lockg)" stroke="#c8c8c8" stroke-width="1.6"/><circle cx="25.1" cy="35" r="3" fill="#555"/><path d="M23.3,36 L26.9,36 L27.8,42.6 L22.4,42.6 Z" fill="#555"/></g><g transform="translate(1072.4,725.2)"><path d="M33.5,27.5 L33.5,18.5 C33.5,13.5 37.5,10.8 44,10.8 C50,10.8 54.5,13.5 57,19.8" fill="none" stroke="#c2c2c2" stroke-width="7.2" stroke-linecap="round"/><path d="M33.5,27.5 L33.5,18.5 C33.5,13.5 37.5,10.8 44,10.8 C50,10.8 54.5,13.5 57,19.8" fill="none" stroke="#e2e2e2" stroke-width="4.4" stroke-linecap="round"/><rect x="8.3" y="28" width="33.4" height="19.2" rx="2" fill="url(#lockg)" stroke="#c8c8c8" stroke-width="1.6"/><circle cx="25.1" cy="35" r="3" fill="#555"/><path d="M23.3,36 L26.9,36 L27.8,42.6 L22.4,42.6 Z" fill="#555"/></g><g transform="translate(1935.1,550.9)"><path d="M33.5,27.5 L33.5,18.5 C33.5,13.5 37.5,10.8 44,10.8 C50,10.8 54.5,13.5 57,19.8" fill="none" stroke="#c2c2c2" stroke-width="7.2" stroke-linecap="round"/><path d="M33.5,27.5 L33.5,18.5 C33.5,13.5 37.5,10.8 44,10.8 C50,10.8 54.5,13.5 57,19.8" fill="none" stroke="#e2e2e2" stroke-width="4.4" stroke-linecap="round"/><rect x="8.3" y="28" width="33.4" height="19.2" rx="2" fill="url(#lockg)" stroke="#c8c8c8" stroke-width="1.6"/><circle cx="25.1" cy="35" r="3" fill="#555"/><path d="M23.3,36 L26.9,36 L27.8,42.6 L22.4,42.6 Z" fill="#555"/></g><g transform="translate(2657.4,476.2)"><path d="M33.5,27.5 L33.5,18.5 C33.5,13.5 37.5,10.8 44,10.8 C50,10.8 54.5,13.5 57,19.8" fill="none" stroke="#c2c2c2" stroke-width="7.2" stroke-linecap="round"/><path d="M33.5,27.5 L33.5,18.5 C33.5,13.5 37.5,10.8 44,10.8 C50,10.8 54.5,13.5 57,19.8" fill="none" stroke="#e2e2e2" stroke-width="4.4" stroke-linecap="round"/><rect x="8.3" y="28" width="33.4" height="19.2" rx="2" fill="url(#lockg)" stroke="#c8c8c8" stroke-width="1.6"/><circle cx="25.1" cy="35" r="3" fill="#555"/><path d="M23.3,36 L26.9,36 L27.8,42.6 L22.4,42.6 Z" fill="#555"/></g><rect x="630" y="888" width="30" height="30" fill="#fff"/><circle cx="644.9" cy="902.8" r="13.4" fill="#fff" stroke="#d6d6d6" stroke-width="1.8"/><path d="M640.5,894.5 L654,902 L640.5,909.5 Z" fill="#666" stroke="#666" stroke-width="1" stroke-linejoin="round"/><rect x="2635.9" y="620" width="25.8" height="25.8" rx="2.2" fill="none" stroke="#3a3a3a" stroke-width="1.8"/><rect x="2635.9" y="627.2" width="25.8" height="1.8" fill="#3a3a3a"/><rect x="2641" y="617.2" width="3.9" height="5.5" fill="#3a3a3a"/><rect x="2653" y="617.2" width="3.9" height="5.5" fill="#3a3a3a"/><rect x="2651" y="635.1" width="7.7" height="7.7" fill="#3a3a3a"/><circle cx="2707.8" cy="632.9" r="12.9" fill="none" stroke="#3a3a3a" stroke-width="1.8"/><path d="M2706.8,625 L2706.8,634.2 L2715.7,634.2" fill="none" stroke="#3a3a3a" stroke-width="1.8"/></svg>
</body></html>
